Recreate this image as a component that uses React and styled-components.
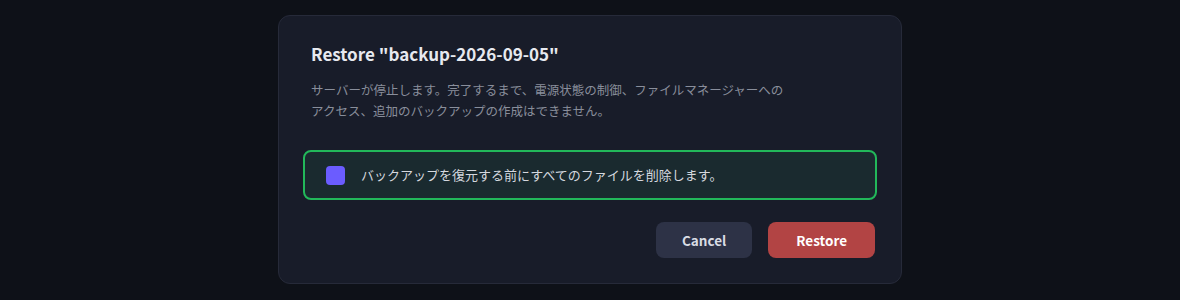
import React, { useState } from "react";
import styled, { createGlobalStyle } from "styled-components";

const Global = createGlobalStyle`
  html, body {
    margin: 0;
    padding: 0;
    background: #0e1118;
  }
  body {
    font-family: "Noto Sans CJK JP", "Noto Sans", sans-serif;
    -webkit-font-smoothing: antialiased;
  }
`;

const Page = styled.div`
  display: flex;
  justify-content: center;
  align-items: flex-start;
  padding-top: 15px;
  height: 300px;
  box-sizing: border-box;
`;

const Modal = styled.div`
  width: 624px;
  box-sizing: border-box;
  background: #181c29;
  border: 1px solid #262a39;
  border-radius: 12px;
  padding: 24px 24px 25px;
`;

const Header = styled.div`
  padding: 0 8px;
`;

const Title = styled.h2`
  margin: 0;
  font-size: 17px;
  line-height: 28px;
  font-weight: 700;
  color: #e7e9ef;
`;

const Description = styled.p`
  margin: 11px 0 0;
  max-width: 480px;
  font-size: 12.5px;
  line-height: 21px;
  color: #898e9b;
`;

const Option = styled.label`
  margin-top: 29px;
  height: 50px;
  box-sizing: border-box;
  display: flex;
  align-items: center;
  gap: 16px;
  padding: 0 21px;
  background: #1a2a2f;
  border: 2px solid #22b85a;
  border-radius: 8px;
  cursor: pointer;
`;

const Check = styled.span`
  width: 19px;
  height: 19px;
  flex: none;
  border-radius: 4px;
  background: ${(p) => (p.$checked ? "#5b4ff0" : "#6b5cff")};
`;

const Label = styled.span`
  font-size: 13px;
  line-height: 20px;
  color: #d5d8df;
`;

const Footer = styled.div`
  margin-top: 22px;
  display: flex;
  justify-content: flex-end;
  gap: 16px;
  padding-right: 2px;
`;

const Button = styled.button`
  height: 36px;
  padding: 0 ${(p) => (p.$variant === "danger" ? "28px" : "26px")};
  border: none;
  border-radius: 8px;
  font-family: inherit;
  font-size: 13.5px;
  font-weight: 700;
  cursor: pointer;
  color: ${(p) => (p.$variant === "danger" ? "#ffffff" : "#d9dce4")};
  background: ${(p) => (p.$variant === "danger" ? "#b24444" : "#2d3246")};
`;

export default function App() {
  const [checked, setChecked] = useState(false);
  return (
    <>
      <Global />
      <Page>
        <Modal>
          <Header>
            <Title>Restore "backup-2026-09-05"</Title>
            <Description>
              サーバーが停止します。完了するまで、電源状態の制御、ファイルマネージャーへのアクセス、追加のバックアップの作成はできません。
            </Description>
          </Header>
          <Option onClick={() => setChecked(!checked)}>
            <Check $checked={checked} />
            <Label>バックアップを復元する前にすべてのファイルを削除します。</Label>
          </Option>
          <Footer>
            <Button>Cancel</Button>
            <Button $variant="danger">Restore</Button>
          </Footer>
        </Modal>
      </Page>
    </>
  );
}
